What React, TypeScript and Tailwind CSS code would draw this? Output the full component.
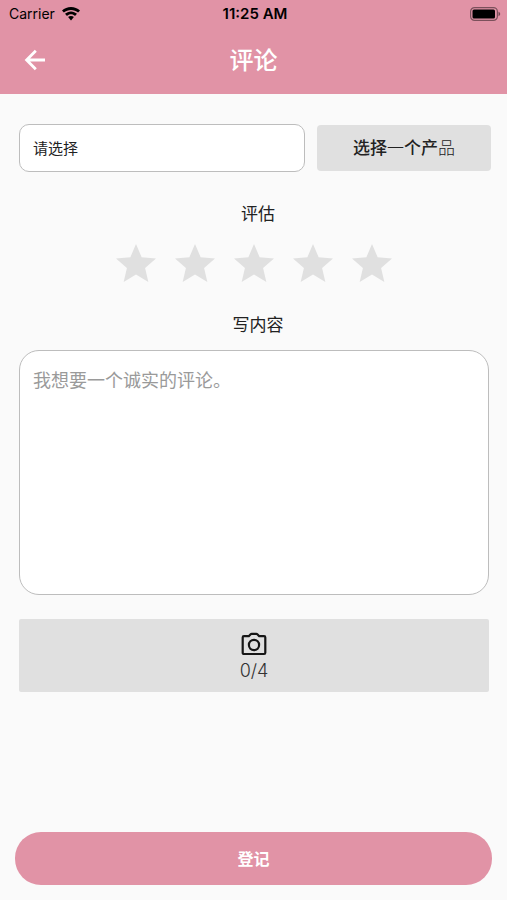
import React, { useState } from "react";
import { MdStar } from "react-icons/md";

const MAX_PHOTOS = 4;
const STARS = [1, 2, 3, 4, 5];

// ============================================================================
// ICONS
// ============================================================================
function WifiIcon() {
  return (
    <svg viewBox="0 0 18 14" className="w-[18px] h-[14px]" fill="black" aria-hidden="true">
      <path d="M9 0C5.600 0 2.400 1.300 0 3.600l1.900 2C3.800 3.800 6.300 2.900 9 2.900s5.200.9 7.100 2.700l1.900-2C15.600 1.300 12.400 0 9 0Z" />
      <path d="M9 4.400c-2.300 0-4.400.9-6 2.400l2 2.100c1.100-1 2.500-1.600 4-1.600s2.900.6 4 1.600l2-2.100c-1.600-1.500-3.700-2.400-6-2.400Z" />
      <path d="M9 8.900c-1.100 0-2.100.4-2.900 1.100L9 13.500l2.900-3.500c-.8-.7-1.800-1.100-2.900-1.100Z" />
    </svg>
  );
}

function BatteryIcon() {
  return (
    <svg viewBox="0 0 31 14" className="w-[31px] h-[14px]" aria-hidden="true">
      <rect x="0.6" y="0.6" width="26.800" height="12.800" rx="4" fill="none" stroke="black" strokeOpacity="0.45" strokeWidth="1.200" />
      <rect x="2.500" y="2.500" width="22.500" height="9" rx="1.500" fill="black" />
      <path d="M28.500 4.800c1 .4 1.700 1.200 1.700 2.200s-.7 1.800-1.700 2.200Z" fill="black" fillOpacity="0.5" />
    </svg>
  );
}

function BackIcon() {
  return (
    <svg viewBox="0 0 30 30" className="w-[30px] h-[30px]" fill="none" stroke="currentColor" strokeWidth="2.800" aria-hidden="true">
      <path d="M25 15H7.500M15.800 5.800 6.600 15l9.200 9.200" />
    </svg>
  );
}

function CameraIcon() {
  return (
    <svg viewBox="0 0 26 24" className="w-[26px] h-6" fill="none" stroke="#161616" strokeWidth="2.200" aria-hidden="true">
      <path strokeLinejoin="round" d="M2.900 4.200h4.900L9.400 2.500c.4-.4.8-.6 1.300-.6h4.600c.5 0 .9.200 1.300.6l1.600 1.700h4.900c.7 0 1.200.5 1.200 1.200v15.400c0 .7-.5 1.200-1.200 1.200H2.900c-.7 0-1.200-.5-1.200-1.200V5.400c0-.7.5-1.200 1.200-1.200Z" />
      <circle cx="13" cy="13" r="5.100" />
    </svg>
  );
}

// ============================================================================
// HEADER
// ============================================================================
function Header() {
  return (
    <header className="bg-[#e193a6]">
      <div className="grid grid-cols-3 items-center h-7 pl-[9px] pr-[6px] text-black">
        <div className="flex items-center gap-[7px] text-sm leading-5">
          <span>Carrier</span>
          <WifiIcon />
        </div>
        <span className="text-center text-[15px] leading-5 font-semibold">11:25 AM</span>
        <div className="flex justify-end">
          <BatteryIcon />
        </div>
      </div>
      <div className="grid grid-cols-[40px_1fr_40px] items-center h-[66px] px-[15px] pb-[2px] text-white">
        <button type="button" aria-label="返回" className="flex justify-center">
          <BackIcon />
        </button>
        <h1 className="pt-[2px] text-center text-2xl font-medium">评论</h1>
      </div>
    </header>
  );
}

// ============================================================================
// PAGE
// ============================================================================
export default function App() {
  const [rating, setRating] = useState(0);

  return (
    <div className="min-h-screen flex flex-col bg-[#fafafa] text-[#222] font-[Inter,'Noto_Sans_CJK_SC',sans-serif]">
      <Header />

      <main className="flex-1 flex flex-col pt-[30px]">
        <div className="flex items-center gap-3 pl-[19px] pr-4">
          <input
            readOnly
            aria-label="产品"
            defaultValue="请选择"
            className="flex-1 min-w-0 h-12 px-[13px] pb-[2px] rounded-[10px] border border-[#bdbdbd] bg-white text-[15px] outline-none"
          />
          <button type="button" className="w-[174px] h-[46px] pt-[2px] rounded-sm bg-[#e0e0e0] text-[17px] font-medium">
            选择<span className="font-light">一</span>个产<span className="font-light">品</span>
          </button>
        </div>

        <div className="flex flex-col pl-[19px] pr-[18px]">
          <h2 className="mt-[30px] pl-2 text-center text-[17px] leading-6">评估</h2>
          <div className="flex justify-center gap-[11px] mt-[14px]">
            {STARS.map((n) => (
              <button key={n} type="button" aria-label={`${n} 星`} onClick={() => setRating(n)}>
                <MdStar className={`w-12 h-12 ${n <= rating ? "text-[#e193a6]" : "text-[#e0e0e0]"}`} />
              </button>
            ))}
          </div>

          <label htmlFor="content" className="mt-[25px] pl-2 text-center text-[17px] leading-6">写内容</label>
          <textarea
            id="content"
            placeholder="我想要一个诚实的评论。"
            className="mt-[13px] h-[245px] px-[13px] py-[18px] rounded-[20px] border border-[#bdbdbd] bg-white text-lg leading-6 placeholder:text-[#9a9a9a] resize-none outline-none"
          />

          <button type="button" className="flex flex-col items-center justify-center mt-6 h-[73px] pt-1 rounded-xs bg-[#e0e0e0]">
            <CameraIcon />
            <span className="mt-[3px] text-lg leading-6 font-light text-[#333]">0/{MAX_PHOTOS}</span>
          </button>
        </div>
      </main>

      <footer className="px-[15px] pt-6 pb-[15px]">
        <button type="submit" className="w-full h-[53px] rounded-[26px] bg-[#e193a6] text-base font-bold text-white">
          登记
        </button>
      </footer>
    </div>
  );
}
